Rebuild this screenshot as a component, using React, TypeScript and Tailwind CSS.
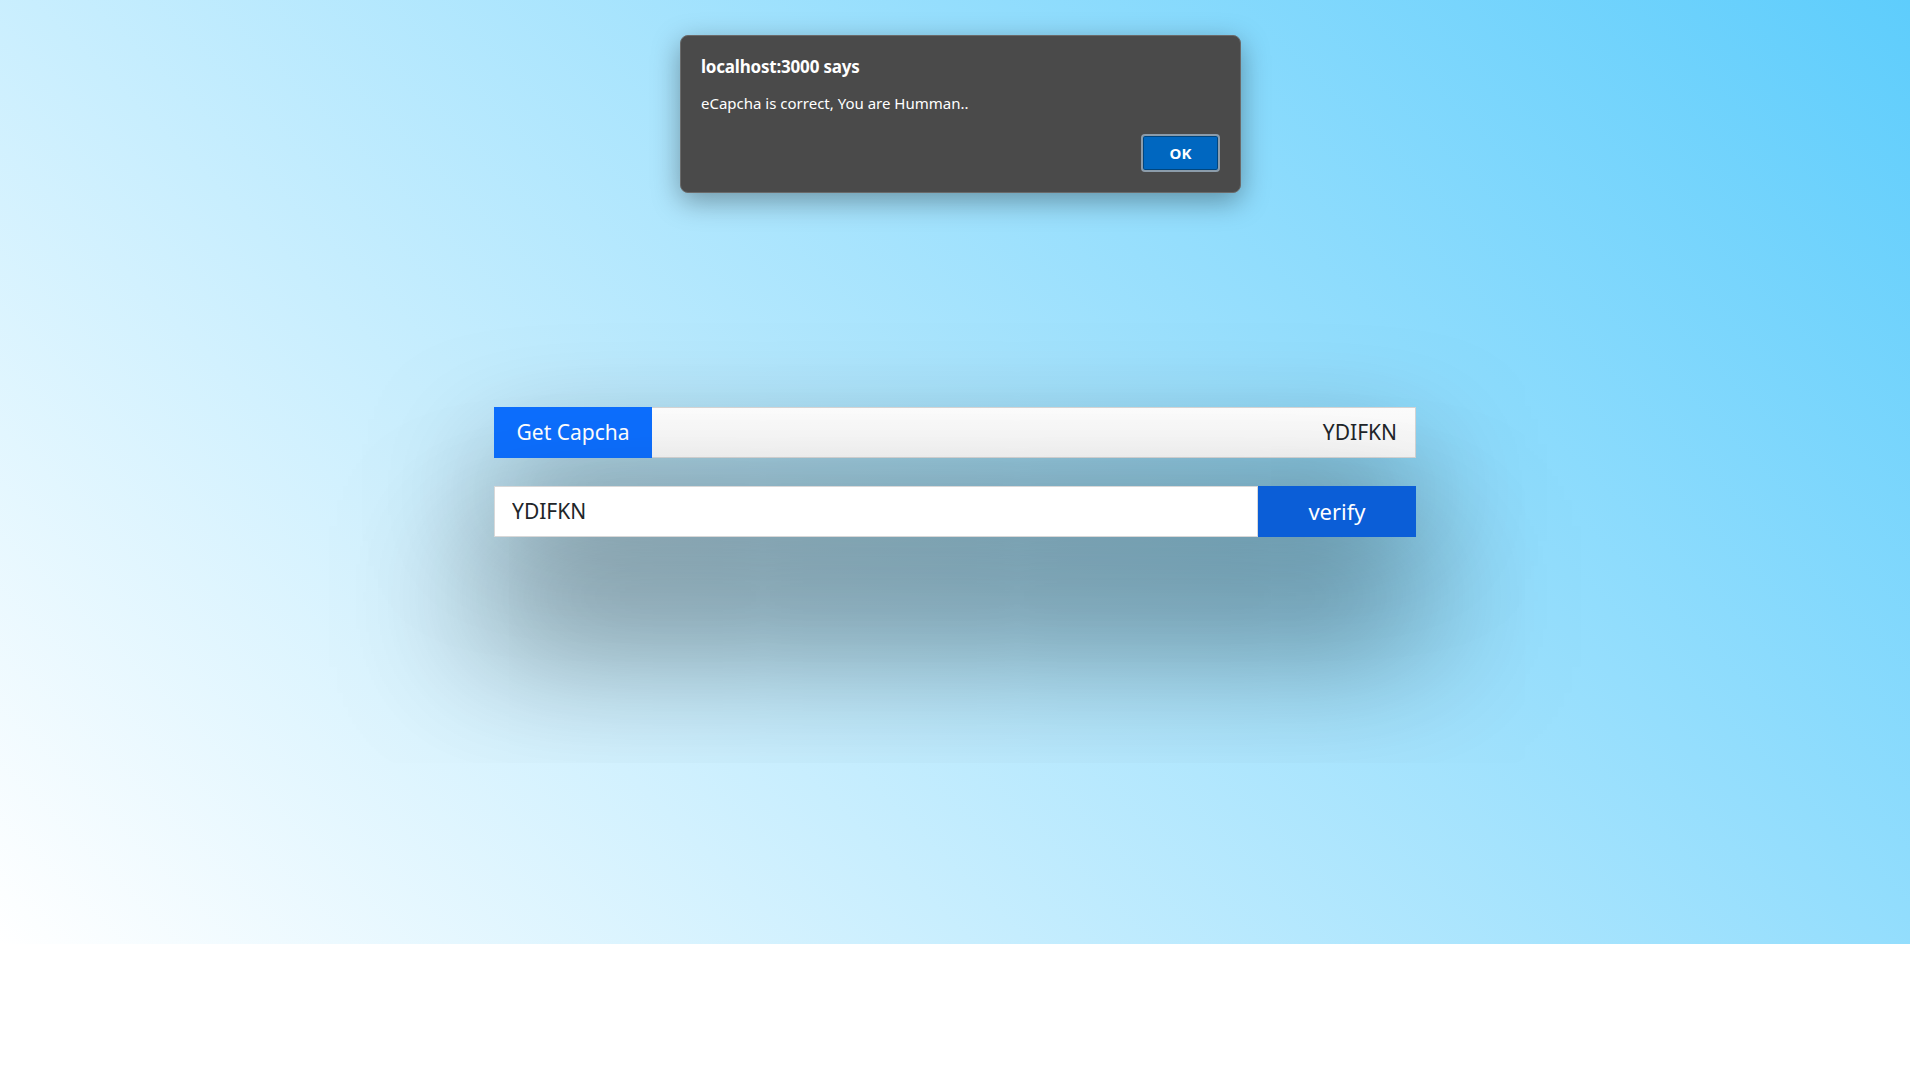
import React from 'react';

const font = { fontFamily: '"Noto Sans", "Open Sans", sans-serif' };

const AlertBox = () => {
    return (
        <div
            style={font}
            className="absolute left-[680px] top-[35px] w-[561px] h-[158px] flex flex-col rounded-[8px] border border-[#6a6a6a] bg-[#4a4a4a] px-[20px] pt-[19px] pb-[20px] text-white shadow-[0_8px_28px_rgba(0,0,0,0.35)]"
        >
            <div className="text-[17px] leading-[24px] font-bold tracking-[-0.2px]">localhost:3000 says</div>
            <div className="mt-[14px] text-[15px] leading-[20px]">eCapcha is correct, You are Humman..</div>
            <div className="mt-auto flex justify-end">
                <button className="w-[79px] h-[38px] rounded-[4px] border-2 border-[#8c9caa] bg-[#0067c0] text-[15px] font-bold text-white shadow-[inset_0_0_0_1px_#00467f]">
                    OK
                </button>
            </div>
        </div>
    );
};

const App = () => {
    return (
        <div className="relative w-[1910px] h-[944px] overflow-hidden bg-[linear-gradient(45deg,#ffffff,#5ecdfc)]">
            <div style={font} className="mx-auto w-[922px] pt-[407px] flex flex-col gap-[28px] text-[21px]">
                <div className="flex h-[51px] shadow-[0_60px_120px_rgba(0,0,0,0.55)]">
                    <button className="w-[158px] shrink-0 bg-[#0d6efd] text-white">Get Capcha</button>
                    <div className="flex-1 flex items-center justify-end pr-[18px] border border-l-0 border-[#d4d4d4] bg-[linear-gradient(#fcfcfc,#f4f4f4)] text-[#212529]">
                        YDIFKN
                    </div>
                </div>
                <div className="flex h-[51px] shadow-[0_85px_140px_10px_rgba(0,0,0,0.62)]">
                    <input
                        readOnly
                        value="YDIFKN"
                        className="flex-1 min-w-0 pl-[17px] border border-[#d8d8d8] bg-white text-[#212529] outline-none"
                    />
                    <button className="w-[158px] shrink-0 bg-[#0b5ed7] text-white text-[22px]">verify</button>
                </div>
            </div>
            <AlertBox />
        </div>
    );
};

export default App;
